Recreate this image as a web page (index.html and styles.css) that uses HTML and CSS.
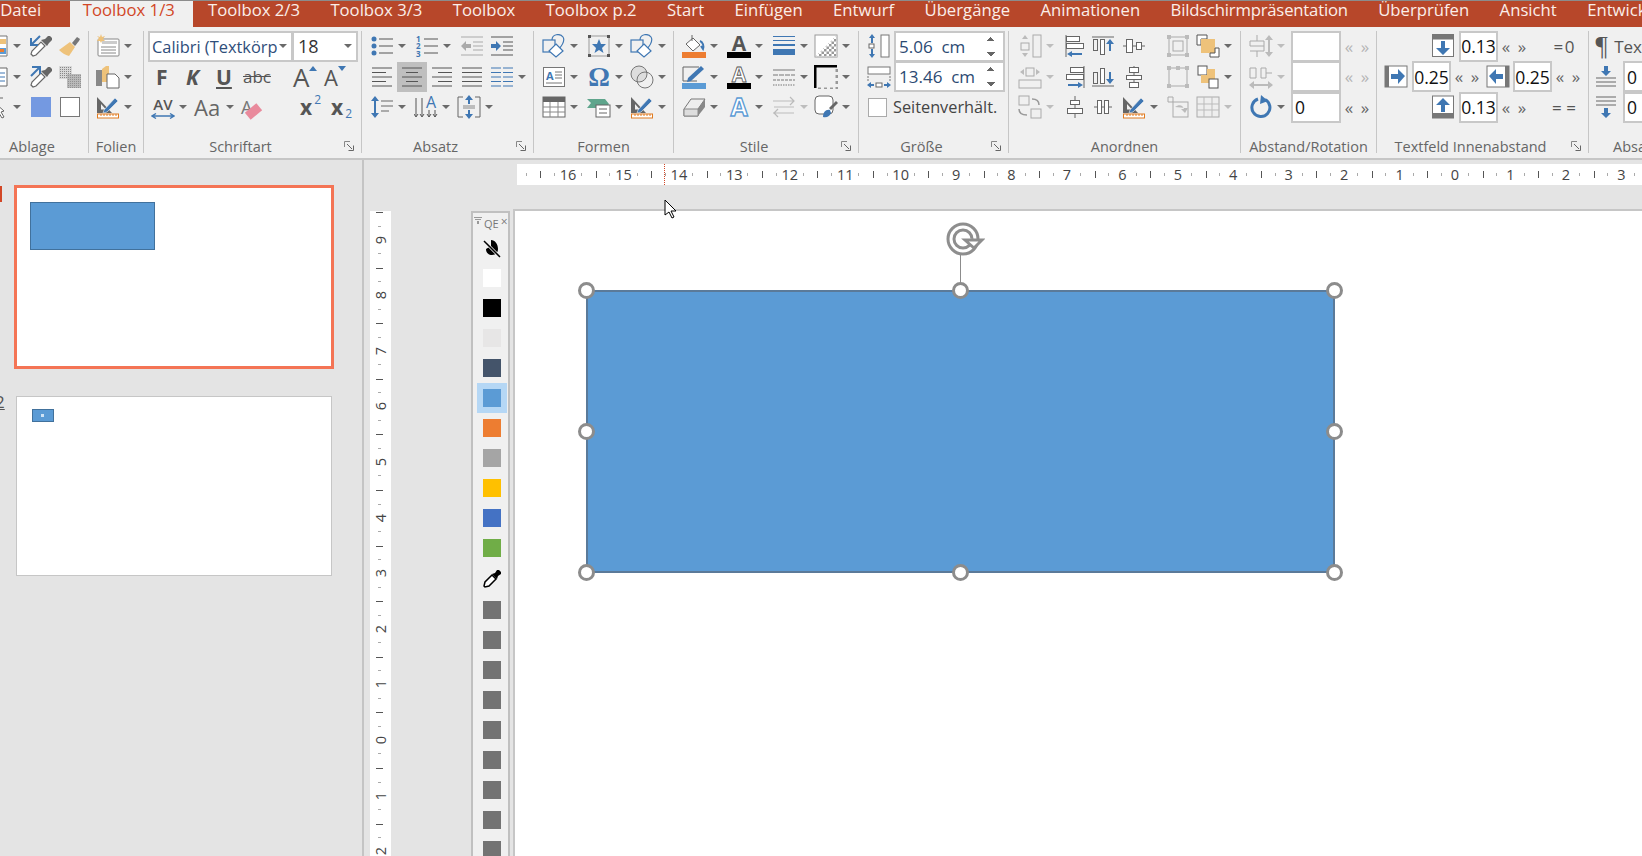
FILE: index.html
```html
<!DOCTYPE html>
<html lang="de">
<head>
    <meta charset="UTF-8">
    <title>PowerPoint Toolbox</title>
    <link rel="stylesheet" href="styles.css">
</head>
<body>
<svg class="sprite">
    <defs>
        <pattern id="chk" width="5" height="5" patternUnits="userSpaceOnUse"><rect width="5" height="5" fill="#fff"/><rect width="2.5" height="2.5" fill="#999"/><rect x="2.5" y="2.5" width="2.5" height="2.5" fill="#999"/></pattern>
        <pattern id="dots" width="2" height="2" patternUnits="userSpaceOnUse"><rect width="2" height="2" fill="#d8d8d8"/><rect width="1" height="1" fill="#888"/></pattern>
        <symbol id="clip1" viewBox="0 0 24 24"><path d="M10 2h12v20H10z" fill="#fff" stroke="#777"/><rect x="13" y="5" width="8" height="5" fill="#eec27a"/><path d="M12 14h9v6h-9z" fill="#5b9bd5"/><rect x="15" y="15" width="4" height="3" fill="#ed7d31"/></symbol>
        <symbol id="clip2" viewBox="0 0 24 24"><path d="M10 3h12v18H10z" fill="#fff" stroke="#666"/><path d="M12 8h8M12 12h8M12 16h8" stroke="#3f77b3"/></symbol>
        <symbol id="clip3" viewBox="0 0 24 24"><path d="M10 3h8M10 8l9 8-3 1 3 5-2 1-3-5-4 3z" fill="#fff" stroke="#666"/></symbol>
        <symbol id="dropin" viewBox="0 0 24 24"><path d="M4 22l-2-2 1-3 9-9 4 4-9 9z" fill="#fff" stroke="#666" stroke-width="1.2"/><path d="M12 6l6 6 2-3 3-3v-2l-2-2h-2l-3 3z" fill="#666"/><path d="M11 2L3 10M2 4v7h7" fill="none" stroke="#3f77b3" stroke-width="2"/></symbol>
        <symbol id="dropout" viewBox="0 0 24 24"><path d="M4 22l-2-2 1-3 9-9 4 4-9 9z" fill="#fff" stroke="#666" stroke-width="1.2"/><path d="M12 6l6 6 2-3 3-3v-2l-2-2h-2l-3 3z" fill="#666"/><path d="M2 11l8-8M3 2h8v7" fill="none" stroke="#3f77b3" stroke-width="2"/></symbol>
        <symbol id="brush" viewBox="0 0 24 24"><path d="M14 9l5-6 3 2-1 2-4 5z" fill="#777"/><path d="M1 16l11-8 5 5-6 9c-4-1-7-3-10-6z" fill="#eec27a"/></symbol>
        <symbol id="hatch" viewBox="0 0 24 24"><rect x="1" y="1" width="13" height="13" fill="url(#dots)"/><rect x="9" y="9" width="14" height="14" fill="#999"/><rect x="9" y="9" width="14" height="14" fill="url(#dots)" opacity=".5"/></symbol>
        <symbol id="sqblue" viewBox="0 0 24 24"><rect x="2" y="2" width="20" height="20" fill="#7499e1"/></symbol>
        <symbol id="sqwhite" viewBox="0 0 24 24"><rect x="2.5" y="2.5" width="19" height="19" fill="#fff" stroke="#777"/></symbol>
        <symbol id="newslide" viewBox="0 0 24 24"><rect x="2" y="5" width="21" height="17" rx="1" fill="#fff" stroke="#888"/><rect x="6" y="7" width="15" height="3" fill="#ccc"/><path d="M5 13h15M5 16h15M5 19h15" stroke="#888"/><path d="M5 0l1 3 3-1-2 3 2 2-3 0-1 2-1-2-3 0 2-3-2-2 3 1z" fill="#eec27a"/></symbol>
        <symbol id="layout" viewBox="0 0 24 24"><rect x="0" y="5" width="6" height="16" fill="#888"/><path d="M6 4l4-3h3v16H6z" fill="#eec27a"/><path d="M11 9h8l4 4v10H11z" fill="#fff" stroke="#666"/></symbol>
        <symbol id="rulerpen" viewBox="0 0 24 24"><path d="M1 2v16h15zM5 9l5 5.5H5z" fill="#666" fill-rule="evenodd"/><path d="M8 15L19 3l3 3-11 11-4 1z" fill="#3f77b3" stroke="#f0f0f0" stroke-width=".6"/><rect x="1.5" y="19" width="21" height="4" fill="#fff" stroke="#e07b20"/><path d="M5 19v2M8 19v2M11 19v2M14 19v2M17 19v2M20 19v2" stroke="#e07b20"/></symbol>
        <symbol id="bullets" viewBox="0 0 24 24"><circle cx="4" cy="5" r="2.5" fill="#3f77b3"/><circle cx="4" cy="12" r="2.5" fill="#3f77b3"/><circle cx="4" cy="19" r="2.5" fill="#3f77b3"/><path d="M9 5h14M9 12h14M9 19h14" stroke="#555"/></symbol>
        <symbol id="numbers" viewBox="0 0 24 24"><text x="1" y="8" font-size="8" fill="#3f77b3" font-weight="700">1</text><text x="1" y="15" font-size="8" fill="#3f77b3" font-weight="700">2</text><text x="1" y="23" font-size="8" fill="#3f77b3" font-weight="700">3</text><path d="M9 5h14M9 12h14M9 19h14" stroke="#555"/></symbol>
        <symbol id="outdent" viewBox="0 0 24 24"><path d="M1 3h22M13 8h10M13 12h10M13 16h10M1 21h22" stroke="#aaa"/><path d="M11 10H6V7l-5 5 5 5v-3h5z" fill="#aaa"/></symbol>
        <symbol id="indent" viewBox="0 0 24 24"><path d="M1 3h22M13 8h10M13 12h10M13 16h10M1 21h22" stroke="#555"/><path d="M1 10h5V7l5 5-5 5v-3H1z" fill="#3f77b3"/></symbol>
        <symbol id="al" viewBox="0 0 24 24"><path d="M2 3h20M2 7.5h14M2 12h20M2 16.5h14M2 21h20" stroke="#555"/></symbol>
        <symbol id="ac" viewBox="0 0 24 24"><path d="M2 3h20M6 7.5h12M2 12h20M6 16.5h12M2 21h20" stroke="#555"/></symbol>
        <symbol id="ar" viewBox="0 0 24 24"><path d="M2 3h20M8 7.5h14M2 12h20M8 16.5h14M2 21h20" stroke="#555"/></symbol>
        <symbol id="aj" viewBox="0 0 24 24"><path d="M2 3h20M2 7.5h20M2 12h20M2 16.5h20M2 21h20" stroke="#555"/></symbol>
        <symbol id="cols" viewBox="0 0 24 24"><path d="M1 3h10M13 3h10M1 7.5h10M13 7.5h10M1 12h10M13 12h10M1 16.5h10M13 16.5h10M1 21h10M13 21h10" stroke="#3f77b3"/></symbol>
        <symbol id="linesp" viewBox="0 0 24 24"><path d="M5 1l4 5H6v12h3l-4 5-4-5h3V6H1z" fill="#3f77b3"/><path d="M11 6h12M11 11h12M11 16h8" stroke="#666"/></symbol>
        <symbol id="textdir" viewBox="0 0 24 24"><text x="12" y="13" font-size="16" fill="#3f77b3">A</text><path d="M2 3v18M8 3v18M15 15v7M21 15v7M0 19l2 3 2-3M6 19l2 3 2-3M13 19l2 3 2-3M19 19l2 3 2-3" fill="none" stroke="#555"/></symbol>
        <symbol id="valign" viewBox="0 0 24 24"><path d="M6 2H1v20h5M18 2h5v20h-5" fill="none" stroke="#666"/><path d="M12 0l4 5h-3v4h-2V5H8zM12 24l4-5h-3v-4h-2v4H8z" fill="#3f77b3"/><path d="M6 11h12M6 13h12" stroke="#888"/></symbol>
        <symbol id="shapes" viewBox="0 0 24 24"><rect x="1" y="6" width="12" height="12" fill="none" stroke="#3f77b3" stroke-width="1.2"/><path d="M10 6c0-6 8-7 11-3 2 3 1 6-4 12" fill="none" stroke="#3f77b3" stroke-width="1.2"/><path d="M14 10l7 7-7 6-7-6z" fill="#fff" stroke="#3f77b3" stroke-width="1.2"/></symbol>
        <symbol id="star" viewBox="0 0 24 24"><rect x="2" y="2" width="20" height="20" fill="none" stroke="#999"/><path d="M12 5l2 5h5l-4 4 1.5 5-4.500-3-4.500 3L9 14l-4-4h5z" fill="#3f77b3"/><path d="M1 1h3v3H1zM20 1h3v3h-3zM1 20h3v3H1zM20 20h3v3h-3z" fill="#555"/></symbol>
        <symbol id="textbox" viewBox="0 0 24 24"><rect x="1.500" y="2.500" width="21" height="19" fill="#fff" stroke="#777"/><text x="4" y="15" font-size="11" font-weight="700" fill="#3f77b3">A</text><path d="M13 7h7M13 10h7M13 13h7M4 18h16" stroke="#777"/></symbol>
        <symbol id="circles" viewBox="0 0 24 24"><circle cx="9" cy="9" r="8" fill="#ddd" stroke="#777"/><circle cx="15" cy="15" r="8" fill="none" stroke="#777"/></symbol>
        <symbol id="table" viewBox="0 0 24 24"><rect x="1" y="2" width="22" height="20" fill="#fff" stroke="#666"/><rect x="1" y="2" width="22" height="5" fill="#666"/><path d="M1 12h22M1 17h22M8 7v15M16 7v15" stroke="#888"/></symbol>
        <symbol id="flow" viewBox="0 0 24 24"><path d="M0 4h18l4 5-3 4H0l4-5z" fill="#5fa58c"/><rect x="9" y="10" width="14" height="12" fill="#fff" stroke="#666"/><path d="M12 14h8M12 18h8" stroke="#666"/></symbol>
        <symbol id="fill" viewBox="0 0 24 24"><path d="M4 10l7-6 7 7-7 6z" fill="#fff" stroke="#666"/><path d="M10 1v6" stroke="#666"/><path d="M18 7c3 1 4 5 3 8l-2-3" fill="none" stroke="#3f77b3" stroke-width="2"/><rect y="18" width="24" height="6" fill="#ed7d31"/></symbol>
        <symbol id="acolor" viewBox="0 0 24 24"><text x="12" y="17" font-size="21" font-weight="700" fill="#555" text-anchor="middle">A</text><rect y="18" width="24" height="6" fill="#000"/></symbol>
        <symbol id="lines" viewBox="0 0 24 24"><path d="M1 2.500h22M1 6.500h22" stroke="#3f77b3"/><path d="M1 11h22" stroke="#3f77b3" stroke-width="2"/><path d="M1 18h22" stroke="#3f77b3" stroke-width="6"/></symbol>
        <symbol id="shadow" viewBox="0 0 24 24"><rect x="1" y="1" width="22" height="22" fill="#fff" stroke="#999"/><path d="M23 1v22H1z" fill="url(#chk)"/></symbol>
        <symbol id="pen" viewBox="0 0 24 24"><path d="M1 2h16M1 2v14h14" fill="none" stroke="#666"/><path d="M6 13L19 1l3 3L9 16l-4 1z" fill="#3f77b3"/><rect y="18" width="24" height="6" fill="#5b9bd5"/></symbol>
        <symbol id="aout" viewBox="0 0 24 24"><text x="12" y="17" font-size="21" font-weight="700" fill="#fff" stroke="#555" stroke-width=".8" text-anchor="middle">A</text><rect y="18" width="24" height="6" fill="#000"/></symbol>
        <symbol id="dashes" viewBox="0 0 24 24"><path d="M1 5h22" stroke="#777"/><path d="M1 10h22" stroke="#777" stroke-dasharray="5 1"/><path d="M1 15h22" stroke="#777" stroke-dasharray="3 1"/><path d="M1 20h22" stroke="#777" stroke-dasharray="1.500 1"/></symbol>
        <symbol id="corner" viewBox="0 0 24 24"><path d="M1 23V1h22" fill="none" stroke="#000" stroke-width="3"/><path d="M23 4v20H4" fill="none" stroke="#999" stroke-width="3" stroke-dasharray="3 3"/></symbol>
        <symbol id="eraser" viewBox="0 0 24 24"><path d="M2 14l7-10h14l-7 10v7H2z" fill="#eee" stroke="#777"/><path d="M16 14l7-10v8l-7 9z" fill="#888"/><path d="M2 14h14v7H2z" fill="#ddd" stroke="#888"/></symbol>
        <symbol id="aglow" viewBox="0 0 24 24"><text x="12" y="21" font-size="25" font-weight="700" fill="#fff" stroke="#5b9bd5" stroke-width="1.300" text-anchor="middle">A</text></symbol>
        <symbol id="arrows" viewBox="0 0 24 24"><path d="M1 6h21M18 2l4 4-4 4M1 18h21M6 14l-4 4 4 4M2 12h20" fill="none" stroke="#bbb" stroke-width="1.200"/></symbol>
        <symbol id="shapebrush" viewBox="0 0 24 24"><rect x="1" y="1" width="18" height="18" rx="4" fill="#fff" stroke="#666"/><path d="M15 13l7-7 2 2-7 7z" fill="#666"/><path d="M9 22c0-5 3-8 7-7l1 3c-1 3-4 5-8 4z" fill="#3f77b3"/></symbol>
        <symbol id="height" viewBox="0 0 24 24"><rect x="14" y="1" width="8" height="22" fill="#fff" stroke="#777"/><path d="M5 0l3 4H6v5H4V4H2zM5 24l3-4H6v-5H4v5H2z" fill="#3f77b3"/><rect x="2" y="10" width="5" height="4" fill="#fff" stroke="#666"/></symbol>
        <symbol id="width" viewBox="0 0 24 24"><rect x="1" y="2" width="22" height="7" fill="#fff" stroke="#777"/><path d="M1 11v6M23 11v6" stroke="#777" stroke-dasharray="2 1"/><path d="M0 20l4-3v2h3v2H4v2zM24 20l-4-3v2h-3v2h3v2z" fill="#3f77b3"/><rect x="9" y="18" width="6" height="4" fill="#fff" stroke="#666"/></symbol>
        <symbol id="dis1" viewBox="0 0 24 24"><rect x="15" y="1" width="8" height="22" fill="none" stroke="#aaa"/><rect x="3" y="9" width="8" height="7" fill="none" stroke="#aaa"/><path d="M7 1l3 4H4zM7 23l3-4H4z" fill="#bbb"/></symbol>
        <symbol id="dis2" viewBox="0 0 24 24"><rect x="1" y="15" width="22" height="8" fill="none" stroke="#aaa"/><rect x="8" y="3" width="8" height="8" fill="none" stroke="#aaa"/><path d="M2 7l4-3v6zM22 7l-4-3v6z" fill="#bbb"/></symbol>
        <symbol id="dis3" viewBox="0 0 24 24"><rect x="1" y="1" width="10" height="9" fill="none" stroke="#aaa"/><rect x="13" y="14" width="10" height="9" fill="none" stroke="#aaa"/><path d="M21 10c0-4-2-6-7-6M1 14c0 4 2 6 8 6" fill="none" stroke="#999" stroke-width="1.500"/></symbol>
        <symbol id="alignl" viewBox="0 0 24 24"><path d="M3 1v22" stroke="#666"/><rect x="3.500" y="2.500" width="13" height="5" fill="#fff" stroke="#666"/><rect x="3.500" y="9.500" width="17" height="5" fill="#fff" stroke="#666"/><path d="M4 20l5-3v2h10v2H9v2z" fill="#3f77b3"/></symbol>
        <symbol id="alignr" viewBox="0 0 24 24"><path d="M21 1v22" stroke="#666"/><rect x="7.500" y="2.500" width="13" height="5" fill="#fff" stroke="#666"/><rect x="3.500" y="9.500" width="17" height="5" fill="#fff" stroke="#666"/><path d="M20 20l-5-3v2H5v2h10v2z" fill="#3f77b3"/></symbol>
        <symbol id="alignc" viewBox="0 0 24 24"><path d="M12 1v22" stroke="#666"/><rect x="7.500" y="5.500" width="9" height="4" fill="#fff" stroke="#666"/><rect x="4.500" y="13.500" width="15" height="5" fill="#fff" stroke="#666"/></symbol>
        <symbol id="top" viewBox="0 0 24 24"><path d="M1 3h22" stroke="#666"/><rect x="2.500" y="5.500" width="4" height="11" fill="none" stroke="#666"/><rect x="9.500" y="5.500" width="4" height="15" fill="#fff" stroke="#666"/><path d="M19 5l4 5h-3v7h-2v-7h-3z" fill="#3f77b3"/></symbol>
        <symbol id="bottom" viewBox="0 0 24 24"><path d="M1 21h22" stroke="#666"/><rect x="2.500" y="7.500" width="4" height="11" fill="none" stroke="#666"/><rect x="9.500" y="3.500" width="4" height="15" fill="#fff" stroke="#666"/><path d="M19 19l4-5h-3V7h-2v7h-3z" fill="#3f77b3"/></symbol>
        <symbol id="midh" viewBox="0 0 24 24"><path d="M1 12h22" stroke="#666"/><rect x="4.500" y="5.500" width="6" height="13" fill="#fff" stroke="#666"/><rect x="14.500" y="8.500" width="5" height="7" fill="#fff" stroke="#666"/></symbol>
        <symbol id="distv" viewBox="0 0 24 24"><path d="M12 1v22" stroke="#666"/><rect x="7.500" y="2.500" width="9" height="5" fill="#fff" stroke="#666"/><rect x="4.500" y="10.500" width="15" height="4" fill="#fff" stroke="#666"/><rect x="7.500" y="17.500" width="9" height="5" fill="#fff" stroke="#666"/></symbol>
        <symbol id="disth" viewBox="0 0 24 24"><path d="M3 12h18" stroke="#666"/><rect x="6.500" y="5.500" width="4" height="13" fill="#fff" stroke="#666"/><rect x="13.500" y="5.500" width="4" height="13" fill="#fff" stroke="#666"/></symbol>
        <symbol id="group" viewBox="0 0 24 24"><rect x="3" y="3" width="18" height="18" fill="none" stroke="#aaa"/><rect x="7" y="7" width="10" height="10" fill="none" stroke="#aaa"/><path d="M1 1h4v4H1zM19 1h4v4h-4zM1 19h4v4H1zM19 19h4v4h-4z" fill="#bbb"/></symbol>
        <symbol id="ungroup" viewBox="0 0 24 24"><rect x="3" y="3" width="18" height="18" fill="none" stroke="#aaa"/><path d="M1 1h4v4H1zM10 1h4v4h-4zM19 1h4v4h-4zM1 19h4v4H1zM19 19h4v4h-4z" fill="#bbb"/></symbol>
        <symbol id="regroup" viewBox="0 0 24 24"><rect x="7" y="7" width="15" height="15" fill="none" stroke="#aaa"/><path d="M2 2h5v5H2z" fill="none" stroke="#aaa"/><path d="M9 12c4-3 8-2 9 2l-3 0 4 4 3-5h-2" fill="#bbb"/></symbol>
        <symbol id="tabledis" viewBox="0 0 24 24"><rect x="1" y="2" width="22" height="20" fill="#eee" stroke="#aaa"/><path d="M1 9h22M1 15h22M8 2v20M16 2v20" stroke="#bbb"/></symbol>
        <symbol id="front" viewBox="0 0 24 24"><path d="M1 1h10v4H5v6H1z" fill="#fff" stroke="#555"/><rect x="5" y="5" width="14" height="14" fill="#eec27a"/><path d="M14 19h5v-5h4v9H14z" fill="#fff" stroke="#555"/></symbol>
        <symbol id="back" viewBox="0 0 24 24"><rect x="2" y="1" width="9" height="9" fill="#fff" stroke="#555"/><path d="M11 4h8v8h-8z" fill="#eec27a"/><path d="M5 10h6v2h8v-2 8H5z" fill="#eec27a"/><rect x="13" y="14" width="9" height="9" fill="#fff" stroke="#555"/></symbol>
        <symbol id="sp1" viewBox="0 0 24 24"><path d="M8 1v6M8 17v6M1 7h14v5H1zM1 17h14v-5" fill="none" stroke="#aaa"/><path d="M20 1l4 5h-3v12h3l-4 5-4-5h3V6h-3z" fill="#bbb"/></symbol>
        <symbol id="sp2" viewBox="0 0 24 24"><path d="M1 3h6v10H1zM12 3v10M12 3h5v10h-5M17 8h6" fill="none" stroke="#aaa"/><path d="M0 20l5-4v3h14v-3l5 4-5 4v-3H5v3z" fill="#bbb"/></symbol>
        <symbol id="rotate" viewBox="0 0 24 24"><path d="M9 4a9 9 0 1 0 7 .5" fill="none" stroke="#3f77b3" stroke-width="3"/><path d="M12 0l7 6-8 3z" fill="#3f77b3"/></symbol>
        <symbol id="mtop" viewBox="0 0 24 24"><rect x=".5" y=".5" width="21" height="22" fill="#fff" stroke="#777"/><rect x=".5" y=".5" width="21" height="5" fill="#777"/><path d="M11 21l7-7h-5V7H9v7H4z" fill="#3f77b3"/></symbol>
        <symbol id="mbottom" viewBox="0 0 24 24"><rect x=".5" y="1" width="21" height="22" fill="#fff" stroke="#777"/><rect x=".5" y="18" width="21" height="5" fill="#777"/><path d="M11 3l7 7h-5v7H9v-7H4z" fill="#3f77b3"/></symbol>
        <symbol id="mleft" viewBox="0 0 24 24"><rect x="1" y="1" width="22" height="21" fill="#fff" stroke="#777"/><rect x="1" y="1" width="4" height="21" fill="#777"/><path d="M21 11l-7-7v5H7v5h7v5z" fill="#3f77b3"/></symbol>
        <symbol id="mright" viewBox="0 0 24 24"><rect x="1" y="1" width="22" height="21" fill="#fff" stroke="#777"/><rect x="19" y="1" width="4" height="21" fill="#777"/><path d="M3 11l7-7v5h7v5h-7v5z" fill="#3f77b3"/></symbol>
        <symbol id="before" viewBox="0 0 24 24"><path d="M12 11l5-5h-3V1h-4v5H7z" fill="#3f77b3"/><path d="M2 13h20M2 17h20M2 21h20" stroke="#666"/></symbol>
        <symbol id="after" viewBox="0 0 24 24"><path d="M2 2h20M2 6h20M2 10h20" stroke="#666"/><path d="M12 23l5-5h-3v-5h-4v5H7z" fill="#3f77b3"/></symbol>
        <symbol id="launch" viewBox="0 0 10 10"><path d="M.5 6V.5H6" fill="none" stroke="#888"/><path d="M3 3l5 5M9.500 4.500v5h-5" fill="none" stroke="#666"/></symbol>
    </defs>
</svg>

<div class="tabs">
    <span class="tab first">Datei</span>
    <span class="tab active">Toolbox 1/3</span>
    <span class="tab">Toolbox 2/3</span>
    <span class="tab">Toolbox 3/3</span>
    <span class="tab">Toolbox</span>
    <span class="tab">Toolbox p.2</span>
    <span class="tab">Start</span>
    <span class="tab">Einfügen</span>
    <span class="tab">Entwurf</span>
    <span class="tab">Übergänge</span>
    <span class="tab">Animationen</span>
    <span class="tab tight">Bildschirmpräsentation</span>
    <span class="tab">Überprüfen</span>
    <span class="tab">Ansicht</span>
    <span class="tab">Entwick</span>
</div>

<div class="ribbon">
    <section class="grp g-ablage">
        <div class="rows">
            <div class="row neg">
                <span class="ic w44"><svg class="i"><use href="#clip1"/></svg><i class="car"></i></span>
                <span class="ic w29"><svg class="i"><use href="#dropin"/></svg></span>
                <span class="ic"><svg class="i"><use href="#brush"/></svg></span>
            </div>
            <div class="row neg">
                <span class="ic w44"><svg class="i"><use href="#clip2"/></svg><i class="car"></i></span>
                <span class="ic w29"><svg class="i"><use href="#dropout"/></svg></span>
                <span class="ic"><svg class="i"><use href="#hatch"/></svg></span>
            </div>
            <div class="row neg">
                <span class="ic w44"><svg class="i"><use href="#clip3"/></svg><i class="car"></i></span>
                <span class="ic w29"><svg class="i"><use href="#sqblue"/></svg></span>
                <span class="ic"><svg class="i"><use href="#sqwhite"/></svg></span>
            </div>
        </div>
        <div class="label"><span>Ablage</span></div>
    </section>

    <section class="grp g-folien">
        <div class="rows pl7">
            <div class="row"><span class="ic"><svg class="i"><use href="#newslide"/></svg><i class="car"></i></span></div>
            <div class="row"><span class="ic"><svg class="i"><use href="#layout"/></svg><i class="car"></i></span></div>
            <div class="row"><span class="ic"><svg class="i"><use href="#rulerpen"/></svg><i class="car"></i></span></div>
        </div>
        <div class="label"><span>Folien</span></div>
    </section>

    <section class="grp g-schrift">
        <div class="rows">
            <div class="row pl4">
                <div class="box font-box"><span class="clip">Calibri (Textkörp</span><i class="car"></i></div>
                <div class="box size-box"><span class="clip">18</span><i class="car"></i></div>
            </div>
            <div class="row pl8">
                <span class="ic w30 fmt">F</span>
                <span class="ic w30 fmt ital">K</span>
                <span class="ic w31 fmt under">U</span>
                <span class="ic w50 fmt strike">abc</span>
                <span class="ic w31 fmt big">A<i class="up"></i></span>
                <span class="ic fmt small">A<i class="down"></i></span>
            </div>
            <div class="row pl7">
                <span class="ic w43"><span class="av">AV<svg class="av-arrow" viewBox="0 0 24 6"><path d="M1 3h22M5 .5L1 3l4 2.500M19 .5L23 3l-4 2.500" fill="none" stroke="#3f77b3" stroke-width="1.300"/></svg></span><i class="car"></i></span>
                <span class="ic w45"><span class="aa">Aa</span><i class="car"></i></span>
                <span class="ic w57 clear"><span class="clear-a">A</span><i class="rub"></i></span>
                <span class="ic w31 fmt">x<sup>2</sup></span>
                <span class="ic fmt">x<sub>2</sub></span>
            </div>
        </div>
        <div class="label"><span>Schriftart</span><svg class="launch"><use href="#launch"/></svg></div>
    </section>

    <section class="grp g-absatz">
        <div class="rows pl8">
            <div class="row">
                <span class="ic w45"><svg class="i"><use href="#bullets"/></svg><i class="car"></i></span>
                <span class="ic w45"><svg class="i"><use href="#numbers"/></svg><i class="car"></i></span>
                <span class="ic w30"><svg class="i"><use href="#outdent"/></svg></span>
                <span class="ic"><svg class="i"><use href="#indent"/></svg></span>
            </div>
            <div class="row">
                <span class="ic w30"><svg class="i"><use href="#al"/></svg></span>
                <span class="ic w30"><svg class="i on"><use href="#ac"/></svg></span>
                <span class="ic w30"><svg class="i"><use href="#ar"/></svg></span>
                <span class="ic w30"><svg class="i"><use href="#aj"/></svg></span>
                <span class="ic"><svg class="i"><use href="#cols"/></svg><i class="car"></i></span>
            </div>
            <div class="row">
                <span class="ic w44"><svg class="i"><use href="#linesp"/></svg><i class="car"></i></span>
                <span class="ic w43"><svg class="i"><use href="#textdir"/></svg><i class="car"></i></span>
                <span class="ic"><svg class="i"><use href="#valign"/></svg><i class="car"></i></span>
            </div>
        </div>
        <div class="label"><span>Absatz</span><svg class="launch"><use href="#launch"/></svg></div>
    </section>

    <section class="grp g-formen">
        <div class="rows pl8">
            <div class="row">
                <span class="ic w45"><svg class="i"><use href="#shapes"/></svg><i class="car"></i></span>
                <span class="ic w43"><svg class="i"><use href="#star"/></svg><i class="car"></i></span>
                <span class="ic"><svg class="i"><use href="#shapes"/></svg><i class="car"></i></span>
            </div>
            <div class="row">
                <span class="ic w45"><svg class="i"><use href="#textbox"/></svg><i class="car"></i></span>
                <span class="ic w43"><span class="omega">Ω</span><i class="car"></i></span>
                <span class="ic"><svg class="i"><use href="#circles"/></svg><i class="car"></i></span>
            </div>
            <div class="row">
                <span class="ic w45"><svg class="i"><use href="#table"/></svg><i class="car"></i></span>
                <span class="ic w43"><svg class="i"><use href="#flow"/></svg><i class="car"></i></span>
                <span class="ic"><svg class="i"><use href="#rulerpen"/></svg><i class="car"></i></span>
            </div>
        </div>
        <div class="label"><span>Formen</span></div>
    </section>

    <section class="grp g-stile">
        <div class="rows pl8">
            <div class="row">
                <span class="ic w45"><svg class="i"><use href="#fill"/></svg><i class="car"></i></span>
                <span class="ic w45"><svg class="i"><use href="#acolor"/></svg><i class="car"></i></span>
                <span class="ic w42"><svg class="i"><use href="#lines"/></svg><i class="car"></i></span>
                <span class="ic"><svg class="i"><use href="#shadow"/></svg><i class="car"></i></span>
            </div>
            <div class="row">
                <span class="ic w45"><svg class="i"><use href="#pen"/></svg><i class="car"></i></span>
                <span class="ic w45"><svg class="i"><use href="#aout"/></svg><i class="car"></i></span>
                <span class="ic w42"><svg class="i"><use href="#dashes"/></svg><i class="car"></i></span>
                <span class="ic"><svg class="i"><use href="#corner"/></svg><i class="car"></i></span>
            </div>
            <div class="row">
                <span class="ic w45"><svg class="i"><use href="#eraser"/></svg><i class="car"></i></span>
                <span class="ic w45"><svg class="i"><use href="#aglow"/></svg><i class="car"></i></span>
                <span class="ic w42"><svg class="i"><use href="#arrows"/></svg><i class="car off"></i></span>
                <span class="ic"><svg class="i"><use href="#shapebrush"/></svg><i class="car"></i></span>
            </div>
        </div>
        <div class="label"><span>Stile</span><svg class="launch"><use href="#launch"/></svg></div>
    </section>

    <section class="grp g-groesse">
        <div class="rows pl8">
            <div class="row">
                <svg class="i"><use href="#height"/></svg>
                <div class="box size-in"><span>5.06&nbsp; cm</span><i class="spin"></i></div>
            </div>
            <div class="row">
                <svg class="i"><use href="#width"/></svg>
                <div class="box size-in"><span>13.46&nbsp; cm</span><i class="spin"></i></div>
            </div>
            <div class="row">
                <i class="check"></i>
                <span class="check-label">Seitenverhält.</span>
            </div>
        </div>
        <div class="label"><span>Größe</span><svg class="launch"><use href="#launch"/></svg></div>
    </section>

    <section class="grp g-anordnen">
        <div class="rows pl9">
            <div class="row">
                <span class="ic w45"><svg class="i"><use href="#dis1"/></svg><i class="car off"></i></span>
                <span class="ic w28"><svg class="i"><use href="#alignl"/></svg></span>
                <span class="ic w31"><svg class="i"><use href="#top"/></svg></span>
                <span class="ic w44"><svg class="i"><use href="#midh"/></svg></span>
                <span class="ic w30"><svg class="i"><use href="#group"/></svg></span>
                <span class="ic"><svg class="i"><use href="#front"/></svg><i class="car"></i></span>
            </div>
            <div class="row">
                <span class="ic w45"><svg class="i"><use href="#dis2"/></svg><i class="car off"></i></span>
                <span class="ic w28"><svg class="i"><use href="#alignr"/></svg></span>
                <span class="ic w31"><svg class="i"><use href="#bottom"/></svg></span>
                <span class="ic w44"><svg class="i"><use href="#distv"/></svg></span>
                <span class="ic w30"><svg class="i"><use href="#ungroup"/></svg></span>
                <span class="ic"><svg class="i"><use href="#back"/></svg><i class="car"></i></span>
            </div>
            <div class="row">
                <span class="ic w45"><svg class="i"><use href="#dis3"/></svg><i class="car off"></i></span>
                <span class="ic w28"><svg class="i"><use href="#alignc"/></svg></span>
                <span class="ic w31"><svg class="i"><use href="#disth"/></svg></span>
                <span class="ic w44"><svg class="i"><use href="#rulerpen"/></svg><i class="car"></i></span>
                <span class="ic w30"><svg class="i"><use href="#regroup"/></svg></span>
                <span class="ic"><svg class="i"><use href="#tabledis"/></svg><i class="car off"></i></span>
            </div>
        </div>
        <div class="label"><span>Anordnen</span></div>
    </section>

    <section class="grp g-abstand">
        <div class="rows pl8">
            <div class="row">
                <span class="ic w42"><svg class="i"><use href="#sp1"/></svg><i class="car off"></i></span>
                <div class="box val wide"></div><span class="chev off">«</span><span class="chev off">»</span>
            </div>
            <div class="row">
                <span class="ic w42"><svg class="i"><use href="#sp2"/></svg><i class="car off"></i></span>
                <div class="box val wide"></div><span class="chev off">«</span><span class="chev off">»</span>
            </div>
            <div class="row">
                <span class="ic w42"><svg class="i"><use href="#rotate"/></svg><i class="car"></i></span>
                <div class="box val wide">0</div><span class="chev">«</span><span class="chev">»</span>
            </div>
        </div>
        <div class="label"><span>Abstand/Rotation</span></div>
    </section>

    <section class="grp g-textfeld">
        <div class="rows">
            <div class="row pl55">
                <svg class="i"><use href="#mtop"/></svg>
                <div class="box val ml3">0.13</div><span class="chev">«</span><span class="chev">»</span>
                <span class="eq">=&hairsp;0</span>
            </div>
            <div class="row pl7">
                <svg class="i"><use href="#mleft"/></svg>
                <div class="box val ml4">0.25</div><span class="chev">«</span><span class="chev">»</span>
                <svg class="i ml3"><use href="#mright"/></svg>
                <div class="box val ml3">0.25</div><span class="chev">«</span><span class="chev">»</span>
            </div>
            <div class="row pl55">
                <svg class="i"><use href="#mbottom"/></svg>
                <div class="box val ml3">0.13</div><span class="chev">«</span><span class="chev">»</span>
                <span class="eq">= =</span>
            </div>
        </div>
        <div class="label"><span>Textfeld Innenabstand</span><svg class="launch"><use href="#launch"/></svg></div>
    </section>

    <section class="grp g-last">
        <div class="rows pl5">
            <div class="row"><span class="pilcrow">¶</span><span class="tex">Tex</span></div>
            <div class="row"><svg class="i"><use href="#before"/></svg><div class="box val last-val ml5">0</div></div>
            <div class="row"><svg class="i"><use href="#after"/></svg><div class="box val last-val ml5">0</div></div>
        </div>
        <div class="label left"><span>Absatz</span></div>
    </section>
</div>

<div class="workspace">
    <aside class="thumbs">
        <div class="thumb-row first">
            <i class="mark"></i>
            <div class="thumb selected"><div class="mini big-mini"></div></div>
        </div>
        <div class="thumb-row second">
            <span class="num">2</span>
            <div class="thumb"><div class="mini tiny-mini"></div></div>
        </div>
    </aside>

    <main class="editor">
        <div class="hruler">
            <i class="mouse-line"></i>
            <span class="cm">16</span><span class="cm">15</span><span class="cm">14</span><span class="cm">13</span><span class="cm">12</span><span class="cm">11</span><span class="cm">10</span><span class="cm">9</span><span class="cm">8</span><span class="cm">7</span><span class="cm">6</span><span class="cm">5</span><span class="cm">4</span><span class="cm">3</span><span class="cm">2</span><span class="cm">1</span><span class="cm">0</span><span class="cm">1</span><span class="cm">2</span><span class="cm">3</span>
        </div>

        <div class="stage">
            <div class="vruler">
                <span class="vcm"><b>9</b></span><span class="vcm"><b>8</b></span><span class="vcm"><b>7</b></span><span class="vcm"><b>6</b></span><span class="vcm"><b>5</b></span><span class="vcm"><b>4</b></span><span class="vcm"><b>3</b></span><span class="vcm"><b>2</b></span><span class="vcm"><b>1</b></span><span class="vcm"><b>0</b></span><span class="vcm"><b>1</b></span><span class="vcm"><b>2</b></span>
            </div>

            <div class="qe">
                <div class="qe-title">
                    <svg class="qe-funnel" viewBox="0 0 8 8"><path d="M0 0h8v1H0zM1 2h6v1H1zM3 4h2v3H3z" fill="#999"/></svg>
                    <span>QE</span><span class="qe-x">×</span>
                </div>
                <div class="qe-item">
                    <svg class="qe-icon" viewBox="0 0 20 20"><path d="M9 2c4 0 7 4 7 9 0 3-2 6-6 6-3 0-6-2-6-6l5-3z" fill="#000"/><path d="M2 3l16 16" stroke="#f0f0f0" stroke-width="3"/><path d="M2 3l16 16" stroke="#000" stroke-width="1.500"/></svg>
                </div>
                <div class="qe-item"><i class="sw c-white"></i></div>
                <div class="qe-item"><i class="sw c-black"></i></div>
                <div class="qe-item"><i class="sw c-light"></i></div>
                <div class="qe-item"><i class="sw c-navy"></i></div>
                <div class="qe-item"><i class="sw c-blue picked"></i></div>
                <div class="qe-item"><i class="sw c-orange"></i></div>
                <div class="qe-item"><i class="sw c-grey"></i></div>
                <div class="qe-item"><i class="sw c-yellow"></i></div>
                <div class="qe-item"><i class="sw c-royal"></i></div>
                <div class="qe-item"><i class="sw c-green"></i></div>
                <div class="qe-item pipette">
                    <svg class="qe-icon" viewBox="0 0 20 20"><path d="M3 18l-1-1 1-4 7-7 4 4-7 7z" fill="#fff" stroke="#000" stroke-width="1.500"/><path d="M10 5l5 5 1-3 3-2V3l-2-2h-2l-2 3z" fill="#000"/></svg>
                </div>
                <div class="qe-item"><i class="sw c-empty"></i></div>
                <div class="qe-item"><i class="sw c-empty"></i></div>
                <div class="qe-item"><i class="sw c-empty"></i></div>
                <div class="qe-item"><i class="sw c-empty"></i></div>
                <div class="qe-item"><i class="sw c-empty"></i></div>
                <div class="qe-item"><i class="sw c-empty"></i></div>
                <div class="qe-item"><i class="sw c-empty"></i></div>
                <div class="qe-item"><i class="sw c-empty"></i></div>
                <div class="qe-item"><i class="sw c-empty"></i></div>
            </div>

            <div class="slide">
                <div class="shape">
                    <svg class="rot" viewBox="0 0 40 40"><circle cx="18" cy="18" r="15" fill="none" stroke="#8e8e8e" stroke-width="3"/><circle cx="18" cy="18" r="9" fill="none" stroke="#8e8e8e" stroke-width="3"/><path d="M19 17l19 2-9 9z" fill="#fff"/><path d="M20 19l17 0-8 8z" fill="none" stroke="#8e8e8e" stroke-width="3"/></svg>
                    <i class="rot-line"></i>
                    <i class="h h-tl"></i><i class="h h-tc"></i><i class="h h-tr"></i>
                    <i class="h h-ml"></i><i class="h h-mr"></i>
                    <i class="h h-bl"></i><i class="h h-bc"></i><i class="h h-br"></i>
                </div>
            </div>
        </div>
    </main>

    <svg class="cursor" viewBox="0 0 14 20"><path d="M1 1v15l4-3 3 6 2-1-3-6h5z" fill="#fff" stroke="#000"/></svg>
</div>
</body>
</html>
```

FILE: styles.css
```css
* {
    box-sizing: border-box;
}
html, body {
    margin: 0;
    height: 856px;
    overflow: hidden;
}
body {
    width: 1642px;
    background-color: #e4e4e4;
    font-family: "Open Sans", "Liberation Sans", sans-serif;
    color: #444;
}
text {
    font-family: "Open Sans", "Liberation Sans", sans-serif;
}
.sprite {
    display: block;
    width: 0;
    height: 0;
}

/* title tabs */
.tabs {
    display: flex;
    height: 27px;
    margin-left: -15px;
    background-color: #b7472a;
    border-top: 1px solid #8c8c8c;
    white-space: nowrap;
    overflow: hidden;
}
.tab {
    flex: none;
    padding: 0 15.2px;
    font-size: 16.7px;
    line-height: 18px;
    color: #fbeee9;
}
.tab.first {
    margin-right: 14px;
}
.tab.tight {
    letter-spacing: -0.2px;
}
.tab.active {
    padding: 0 18px 0 12.5px;
    background-color: #f0f0f0;
    color: #d24726;
    height: 26px;
}

/* ribbon */
.ribbon {
    display: flex;
    height: 133px;
    padding: 4px 0 5px;
    background-color: #f0f0f0;
    border-bottom: 2px solid #c6c6c6;
}
.grp {
    flex: none;
    display: flex;
    flex-direction: column;
    border-right: 1px solid #c6c6c6;
}
.g-ablage { width: 89px; }
.g-ablage .label { margin-left: -24px; }
.g-folien { width: 55px; }
.g-schrift { width: 218px; }
.g-absatz { width: 172px; }
.g-formen { width: 140px; }
.g-stile { width: 185px; }
.g-groesse { width: 150px; }
.g-anordnen { width: 232px; }
.g-abstand { width: 136px; }
.g-textfeld { width: 212px; }
.g-last { flex: 1; border-right: none; overflow: hidden; }

.rows {
    display: flex;
    flex-direction: column;
}
.row {
    display: flex;
    align-items: center;
    height: 30.5px;
    white-space: nowrap;
}
.neg { margin-left: -15px; }
.pl4 { padding-left: 4px; }
.pl5 { padding-left: 5px; }
.pl6 { padding-left: 6px; }
.pl7 { padding-left: 7px; }
.pl8 { padding-left: 8px; }
.pl9 { padding-left: 9px; }
.pl55 { padding-left: 55px; }
.ml3 { margin-left: 3px; }
.ml4 { margin-left: 4px; }
.ml5 { margin-left: 5px; }

.label {
    display: flex;
    align-items: center;
    margin-top: auto;
    height: 14px;
    font-size: 14.5px;
    color: #666;
}
.label span {
    flex: 1;
    text-align: center;
    white-space: nowrap;
}
.label.left span {
    text-align: left;
    padding-left: 24px;
}
.launch {
    flex: none;
    width: 10px;
    height: 10px;
    margin: 0 7px;
}

.ic {
    flex: none;
    display: flex;
    align-items: center;
}
.w28 { width: 28px; }
.w29 { width: 29px; }
.w30 { width: 30px; }
.w31 { width: 31px; }
.w42 { width: 42px; }
.w43 { width: 43px; }
.w44 { width: 44px; }
.w45 { width: 45px; }
.w50 { width: 50px; }
.w57 { width: 57px; }
.i {
    flex: none;
    width: 24px;
    height: 24px;
    overflow: visible;
}
.i.on {
    background-color: #bfbfbf;
    box-shadow: 0 0 0 3px #bfbfbf;
}
.car {
    flex: none;
    width: 0;
    height: 0;
    margin-left: 4px;
    border-left: 4px solid transparent;
    border-right: 4px solid transparent;
    border-top: 4px solid #6a6a6a;
}
.car.off {
    border-top-color: #bdbdbd;
}

/* inputs */
.box {
    flex: none;
    display: flex;
    align-items: center;
    height: 31px;
    background-color: #fff;
    border: 2px solid #c8c8c8;
    font-size: 17px;
    color: #333;
}
.clip {
    flex: 1;
    overflow: hidden;
    white-space: nowrap;
}
.font-box {
    width: 145px;
    padding-left: 2px;
    margin-right: -1px;
}
.font-box .clip {
    font-size: 16.4px;
    color: #2f4e7a;
}
.font-box .car, .size-box .car {
    margin: 0 4px 0 2px;
}
.size-box {
    width: 66px;
    padding-left: 4px;
    font-size: 18px;
}
.size-in {
    width: 111px;
    margin-left: 3px;
    padding: 0 8px 0 3px;
    justify-content: space-between;
    color: #2c4a72;
}
.spin {
    width: 8px;
    height: 19px;
    background:
        linear-gradient(135deg, transparent 50%, #666 50%) 0 0/4px 4px no-repeat,
        linear-gradient(225deg, transparent 50%, #666 50%) 4px 0/4px 4px no-repeat,
        linear-gradient(45deg, transparent 50%, #666 50%) 0 15px/4px 4px no-repeat,
        linear-gradient(315deg, transparent 50%, #666 50%) 4px 15px/4px 4px no-repeat;
}
.check {
    flex: none;
    width: 19px;
    height: 19px;
    margin-left: 1px;
    background-color: #fff;
    border: 1px solid #aaa;
}
.check-label {
    margin-left: 6px;
    font-size: 16.3px;
    color: #444;
}
.val {
    width: 39px;
    justify-content: center;
    color: #111;
    font-size: 17.5px;
}
.val.wide {
    width: 50px;
    justify-content: flex-start;
    padding-left: 2px;
}
.val.last-val {
    justify-content: flex-start;
    padding-left: 2px;
}
.chev {
    flex: none;
    width: 16px;
    text-align: center;
    font-size: 17px;
    color: #666;
}
.chev.off {
    color: #b5b5b5;
}
.eq {
    width: 40px;
    margin-left: 14px;
    text-align: center;
    font-size: 17px;
    color: #555;
}
.pilcrow {
    width: 24px;
    text-align: center;
    font-family: "Liberation Serif", serif;
    font-size: 27px;
    color: #555;
}
.tex {
    margin-left: 5px;
    font-size: 17px;
    color: #555;
}

/* font buttons */
.fmt {
    font-size: 21px;
    font-weight: 700;
    color: #555;
    justify-content: flex-start;
    padding-left: 4px;
}
.ital { font-style: italic; }
.under { text-decoration: underline; }
.strike {
    font-size: 17px;
    font-weight: 400;
    text-decoration: line-through;
    padding-left: 0;
}
.fmt.big { font-size: 26px; font-weight: 400; padding-left: 0; }
.fmt.small { font-size: 22px; font-weight: 400; padding-left: 0; }
.fmt sup, .fmt sub {
    margin-left: 2px;
    font-size: 12px;
    font-weight: 400;
    color: #3f77b3;
    line-height: 0;
}
.fmt sup { margin-bottom: 14px; }
.fmt sub { margin-top: 14px; }
.up, .down {
    width: 0;
    height: 0;
    margin-bottom: 16px;
    border-left: 4px solid transparent;
    border-right: 4px solid transparent;
}
.up { border-bottom: 5px solid #3f77b3; }
.down { border-top: 5px solid #3f77b3; }
.av {
    display: flex;
    flex-direction: column;
    align-items: center;
    width: 24px;
    font-size: 15px;
    font-weight: 600;
    line-height: 16px;
    color: #555;
}
.av-arrow {
    display: block;
    width: 24px;
    height: 6px;
    margin-top: 1px;
}
.aa {
    width: 24px;
    font-size: 22px;
    color: #666;
    line-height: 24px;
    white-space: nowrap;
}
.aa + .car {
    margin-left: 8px;
}
.clear-a {
    font-size: 18px;
    color: #777;
    margin-left: 2px;
}
.rub {
    width: 15px;
    height: 9px;
    margin-left: -6px;
    margin-top: 9px;
    background-color: #e98a9c;
    transform: rotate(-40deg);
}
.omega {
    width: 24px;
    text-align: center;
    font-family: "Liberation Serif", serif;
    font-size: 27px;
    font-weight: 700;
    line-height: 24px;
    color: #3f77b3;
}

/* slide thumbnails */
.workspace {
    position: relative;
    display: flex;
    height: 696px;
}
.thumbs {
    flex: none;
    width: 364px;
    border-right: 2px solid #c4c4c4;
}
.thumb-row {
    display: flex;
}
.thumb-row.first { padding-top: 25px; }
.thumb-row.second { padding-top: 27px; }
.mark {
    flex: none;
    width: 2px;
    height: 16px;
    margin: 1px 12px 0 0;
    background-color: #d24726;
}
.num {
    flex: none;
    width: 21px;
    margin: -4px 0 0 -5px;
    font-size: 17px;
    line-height: 20px;
    text-decoration: underline;
    color: #555;
}
.thumb {
    width: 316px;
    height: 180px;
    background-color: #fff;
    border: 1px solid #c6c6c6;
    padding: 12px 0 0 15px;
}
.thumb.selected {
    width: 320px;
    height: 184px;
    border: 3px solid #f47455;
    padding: 14px 0 0 13px;
}
.mini {
    background-color: #5b9bd5;
    border: 1px solid #41719c;
}
.big-mini {
    width: 125px;
    height: 48px;
}
.tiny-mini {
    width: 22px;
    height: 13px;
    padding: 4px 0 0 8px;
}
.tiny-mini::after {
    content: "";
    display: block;
    width: 3px;
    height: 3px;
    background-color: #cfe3f5;
}

/* rulers */
.editor {
    flex: 1;
    min-width: 0;
    overflow: hidden;
}
.hruler {
    position: relative;
    display: flex;
    height: 21px;
    margin: 4px 0 0 153px;
    padding-left: 23.3px;
    background: #fff linear-gradient(#aaa, #aaa) 9px 9px/1px 3px no-repeat;
}
.cm {
    flex: none;
    width: 55.45px;
    text-align: center;
    font-size: 14.5px;
    line-height: 21px;
    color: #444;
    background:
        linear-gradient(#555, #555) 0 7px/1px 7px no-repeat,
        linear-gradient(#aaa, #aaa) 25% 9px/1px 3px no-repeat,
        linear-gradient(#aaa, #aaa) 75% 9px/1px 3px no-repeat;
}
.mouse-line {
    position: absolute;
    left: 147px;
    top: 0;
    height: 21px;
    border-left: 1px dotted #d24726;
}
.stage {
    display: flex;
    height: 487px;
    margin-top: 24px;
}
.vruler {
    flex: none;
    width: 21px;
    height: 700px;
    margin: 2px 0 0 6px;
    padding-top: 1px;
    background-color: #fff;
}
.vcm {
    display: flex;
    align-items: center;
    justify-content: center;
    height: 55.6px;
    background:
        linear-gradient(#555, #555) 6px 0/7px 1px no-repeat,
        linear-gradient(#aaa, #aaa) 8px 25%/3px 1px no-repeat,
        linear-gradient(#aaa, #aaa) 8px 75%/3px 1px no-repeat;
}
.vcm b {
    font-size: 14.5px;
    font-weight: 400;
    color: #444;
    writing-mode: vertical-rl;
    transform: rotate(180deg);
}

/* QE colour bar */
.qe {
    flex: none;
    width: 39px;
    height: 700px;
    margin: 2px 0 0 80px;
    padding-left: 3px;
    background-color: #f0f0f0;
    border: 2px solid #c0c0c0;
    border-bottom: none;
}
.qe-title {
    display: flex;
    align-items: center;
    height: 20px;
    margin-left: -3px;
    padding-left: 1px;
    font-size: 11px;
    color: #777;
}
.qe-funnel {
    width: 8px;
    height: 8px;
    margin: 0 2px 4px 0;
}
.qe-x {
    margin: -4px 0 0 2px;
    font-size: 12px;
}
.qe-item {
    display: flex;
    align-items: center;
    justify-content: center;
    height: 30px;
}
.pipette { height: 32px; }
.qe-icon {
    width: 20px;
    height: 20px;
}
.sw {
    display: block;
    width: 18px;
    height: 18px;
}
.c-white { background-color: #fff; }
.c-black { background-color: #000; }
.c-light { background-color: #e7e6e6; }
.c-navy { background-color: #44546a; }
.c-blue { background-color: #5b9bd5; }
.c-orange { background-color: #ed7d31; }
.c-grey { background-color: #a5a5a5; }
.c-yellow { background-color: #ffc000; }
.c-royal { background-color: #4472c4; }
.c-green { background-color: #70ad47; }
.c-empty { background-color: #737373; }
.picked { box-shadow: 0 0 0 6px #b5d7f5; }

/* slide canvas */
.slide {
    position: relative;
    flex: 1;
    height: 700px;
    margin-left: 3px;
    background-color: #fff;
    border-top: 2px solid #c6c6c6;
    border-left: 2px solid #c6c6c6;
}
.shape {
    position: absolute;
    left: 71px;
    top: 79px;
    width: 749px;
    height: 283px;
    background-color: #5b9bd5;
    border: 2px solid #5b7a99;
}
.h {
    position: absolute;
    width: 17px;
    height: 17px;
    margin: -8.5px 0 0 -8.5px;
    background-color: #fff;
    border: 3px solid #8c8c8c;
    border-radius: 50%;
}
.h-tl, .h-ml, .h-bl { left: -2px; }
.h-tc, .h-bc { left: 50%; }
.h-tr, .h-mr, .h-br { left: calc(100% + 1px); }
.h-tl, .h-tc, .h-tr { top: -2px; }
.h-ml, .h-mr { top: 50%; }
.h-bl, .h-bc, .h-br { top: calc(100% + 1px); }
.rot {
    position: absolute;
    left: 357px;
    top: -71px;
    width: 40px;
    height: 40px;
}
.rot-line {
    position: absolute;
    left: calc(50% - 1px);
    top: -37px;
    width: 1px;
    height: 30px;
    background-color: #8c8c8c;
}
.cursor {
    position: absolute;
    left: 664px;
    top: 39px;
    width: 14px;
    height: 20px;
}
```
